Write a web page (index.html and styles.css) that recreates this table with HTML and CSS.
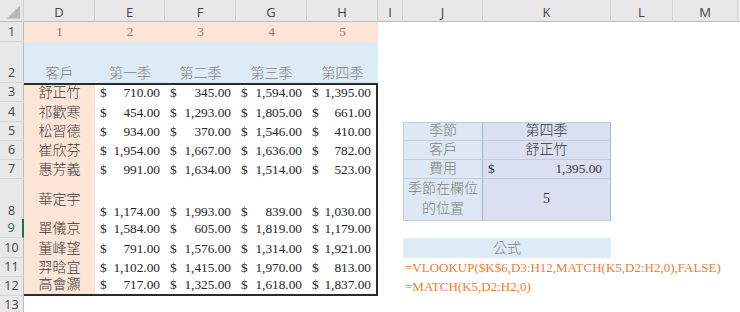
FILE: index.html
```
<!DOCTYPE html>
<html lang="zh-Hant">
<head>
<meta charset="utf-8">
<title>VLOOKUP MATCH</title>
<link rel="stylesheet" href="styles.css">
</head>
<body>
<div class="sheet">
  <div class="row hdr">
    <div class="corner"><svg width="24" height="22" viewBox="0 0 24 22"><polygon points="21,5 21,19 7,19" fill="#b9b9b9"/></svg></div>
    <div class="ch">D</div><div class="ch">E</div><div class="ch">F</div><div class="ch">G</div><div class="ch">H</div>
    <div class="ch">I</div><div class="ch">J</div><div class="ch">K</div><div class="ch">L</div><div class="ch">M</div><div class="ch last"></div>
  </div>

  <div class="row h20">
    <div class="rh">1</div>
    <div class="c salmon center gray mid">1</div>
    <div class="c salmon center gray mid">2</div>
    <div class="c salmon center gray mid">3</div>
    <div class="c salmon center gray mid">4</div>
    <div class="c salmon center gray mid">5</div>
  </div>

  <div class="row h41">
    <div class="rh">2</div>
    <div class="c blue center gray cjk">客戶</div>
    <div class="c blue center gray cjk">第一季</div>
    <div class="c blue center gray cjk">第二季</div>
    <div class="c blue center gray cjk">第三季</div>
    <div class="c blue center gray cjk">第四季</div>
  </div>

  <div class="row h19">
    <div class="rh">3</div>
    <div class="c salmon center name bt">舒正竹</div>
    <div class="c acct bt"><span>$</span><span>710.00</span></div>
    <div class="c acct bt"><span>$</span><span>345.00</span></div>
    <div class="c acct bt"><span>$</span><span>1,594.00</span></div>
    <div class="c acct bt br"><span>$</span><span>1,395.00</span></div>
  </div>

  <div class="row h19">
    <div class="rh">4</div>
    <div class="c salmon center name">祁歡寒</div>
    <div class="c acct"><span>$</span><span>454.00</span></div>
    <div class="c acct"><span>$</span><span>1,293.00</span></div>
    <div class="c acct"><span>$</span><span>1,805.00</span></div>
    <div class="c acct br"><span>$</span><span>661.00</span></div>
  </div>

  <div class="row h19">
    <div class="rh">5</div>
    <div class="c salmon center name">松習德</div>
    <div class="c acct"><span>$</span><span>934.00</span></div>
    <div class="c acct"><span>$</span><span>370.00</span></div>
    <div class="c acct"><span>$</span><span>1,546.00</span></div>
    <div class="c acct br"><span>$</span><span>410.00</span></div>
    <div class="c"></div>
    <div class="c lbl center tt tl">季節</div>
    <div class="c val center tt">第四季</div>
  </div>

  <div class="row h19">
    <div class="rh">6</div>
    <div class="c salmon center name">崔欣芬</div>
    <div class="c acct"><span>$</span><span>1,954.00</span></div>
    <div class="c acct"><span>$</span><span>1,667.00</span></div>
    <div class="c acct"><span>$</span><span>1,636.00</span></div>
    <div class="c acct br"><span>$</span><span>782.00</span></div>
    <div class="c"></div>
    <div class="c lbl center tl">客戶</div>
    <div class="c val center">舒正竹</div>
  </div>

  <div class="row h19">
    <div class="rh">7</div>
    <div class="c salmon center name">惠芳義</div>
    <div class="c acct"><span>$</span><span>991.00</span></div>
    <div class="c acct"><span>$</span><span>1,634.00</span></div>
    <div class="c acct"><span>$</span><span>1,514.00</span></div>
    <div class="c acct br"><span>$</span><span>523.00</span></div>
    <div class="c"></div>
    <div class="c lbl center tl">費用</div>
    <div class="c val acct wide"><span>$</span><span>1,395.00</span></div>
  </div>

  <div class="row h40">
    <div class="rh">8</div>
    <div class="c salmon center name mid">華定宇</div>
    <div class="c acct"><span>$</span><span>1,174.00</span></div>
    <div class="c acct"><span>$</span><span>1,993.00</span></div>
    <div class="c acct"><span>$</span><span>839.00</span></div>
    <div class="c acct br"><span>$</span><span>1,030.00</span></div>
    <div class="c"></div>
    <div class="c lbl center tl mid wrap">季節在欄位<br>的位置</div>
    <div class="c val center mid">5</div>
  </div>

  <div class="row h19">
    <div class="rh sel">9</div>
    <div class="c salmon center name">單儀京</div>
    <div class="c acct"><span>$</span><span>1,584.00</span></div>
    <div class="c acct"><span>$</span><span>605.00</span></div>
    <div class="c acct"><span>$</span><span>1,819.00</span></div>
    <div class="c acct br"><span>$</span><span>1,179.00</span></div>
  </div>

  <div class="row h19">
    <div class="rh">10</div>
    <div class="c salmon center name">董峰望</div>
    <div class="c acct"><span>$</span><span>791.00</span></div>
    <div class="c acct"><span>$</span><span>1,576.00</span></div>
    <div class="c acct"><span>$</span><span>1,314.00</span></div>
    <div class="c acct br"><span>$</span><span>1,921.00</span></div>
    <div class="c"></div>
    <div class="c blue center gray cjk span2">公式</div>
  </div>

  <div class="row h19">
    <div class="rh">11</div>
    <div class="c salmon center name">羿晗宜</div>
    <div class="c acct"><span>$</span><span>1,102.00</span></div>
    <div class="c acct"><span>$</span><span>1,415.00</span></div>
    <div class="c acct"><span>$</span><span>1,970.00</span></div>
    <div class="c acct br"><span>$</span><span>813.00</span></div>
    <div class="c"></div>
    <div class="c formula span4">=VLOOKUP($K$6,D3:H12,MATCH(K5,D2:H2,0),FALSE)</div>
  </div>

  <div class="row h19">
    <div class="rh">12</div>
    <div class="c salmon center name bb">高會灝</div>
    <div class="c acct bb"><span>$</span><span>717.00</span></div>
    <div class="c acct bb"><span>$</span><span>1,325.00</span></div>
    <div class="c acct bb"><span>$</span><span>1,618.00</span></div>
    <div class="c acct bb br"><span>$</span><span>1,837.00</span></div>
    <div class="c"></div>
    <div class="c formula span4">=MATCH(K5,D2:H2,0)</div>
  </div>

  <div class="row h19">
    <div class="rh">13</div>
  </div>
</div>
</body>
</html>
```

FILE: styles.css
```
* {
  box-sizing: border-box;
  margin: 0;
  padding: 0;
}

body {
  margin: 0;
  width: 740px;
  height: 312px;
  overflow: hidden;
  background: #ffffff;
  font-family: "Liberation Serif", "Noto Sans CJK TC", serif;
}

.sheet {
  display: flex;
  flex-direction: column;
}

.row {
  display: grid;
  grid-template-columns: 24px 71px 70px 71px 71px 71px 25px 80px 128px 62px 65px 1fr;
}

.hdr {
  height: 22px;
  background: #e8e8e8;
  border-bottom: 1px solid #bcbcbc;
}

.corner {
  border-right: 1px solid #cfcfcf;
  display: flex;
}

.ch {
  font-family: "Open Sans", "Noto Sans", sans-serif;
  font-size: 13px;
  color: #444444;
  display: flex;
  align-items: center;
  justify-content: center;
  border-right: 1px solid #d2d2d2;
  padding-top: 1px;
}

.ch.last {
  border-right: none;
}

.h20 { height: 20px; }
.h41 { height: 41px; }
.h19 { height: 19.3px; }
.h40 { height: 39.5px; }

.rh {
  background: #e8e8e8;
  border-right: 1px solid #bcbcbc;
  border-bottom: 1px solid #d6d6d6;
  font-family: "Open Sans", "Noto Sans", sans-serif;
  font-size: 12.5px;
  line-height: 14px;
  color: #444444;
  display: flex;
  align-items: flex-end;
  justify-content: center;
  padding-bottom: 2px;
}

.rh.sel {
  color: #217346;
  border-right: 2px solid #217346;
}

.c {
  display: flex;
  align-items: flex-end;
  padding-bottom: 1px;
  font-size: 13.3px;
  line-height: 16px;
  color: #262626;
  white-space: nowrap;
  min-width: 0;
}

.salmon { background: #fce4d6; }
.blue { background: #ddebf7; }

.center {
  justify-content: center;
  text-align: center;
}

.mid { align-items: center; }

.gray { color: #808080; }

.cjk {
  font-size: 14px;
  font-weight: 300;
}

.name {
  font-size: 14px;
  font-weight: 300;
  color: #3a3a3a;
}

.acct {
  justify-content: space-between;
  padding: 0 5px 1px 5px;
}

.acct.wide {
  padding: 0 8px 1px 5px;
}

.bt { border-top: 2px solid #2b2b2b; }
.bb { border-bottom: 2px solid #2b2b2b; }
.br { border-right: 2px solid #2b2b2b; }

.lbl {
  background: #dde8f4;
  color: #7f7f7f;
  font-size: 14px;
  font-weight: 300;
  border-right: 1px solid #aab3c4;
  border-bottom: 1px solid #c5ccd9;
}

.val {
  background: #dbe0f1;
  color: #333333;
  font-size: 14px;
  font-weight: 300;
  border-right: 1px solid #aab3c4;
  border-bottom: 1px solid #c5ccd9;
}

.val.acct {
  font-size: 13.3px;
  font-weight: 400;
}

.tt { border-top: 1px solid #c5ccd9; }
.tl { border-left: 1px solid #c5ccd9; }

.wrap {
  white-space: normal;
  line-height: 20px;
}

.span2 { grid-column: span 2; }
.span4 { grid-column: span 4; }

.formula {
  color: #ed7d31;
  font-size: 13px;
  padding-left: 2px;
  overflow: visible;
}
```
